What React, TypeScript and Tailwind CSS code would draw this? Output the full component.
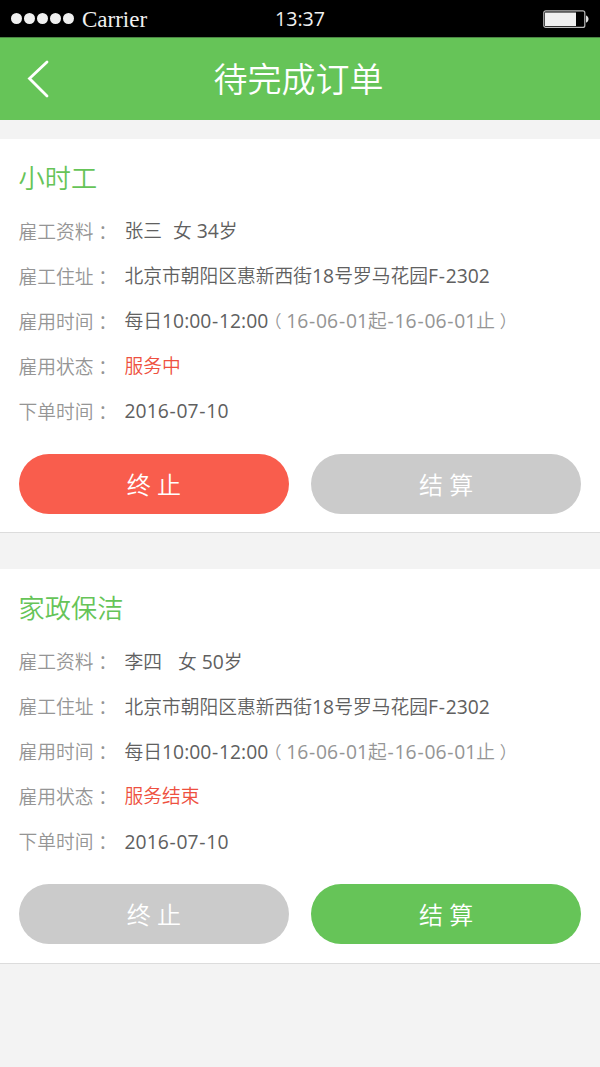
import clsx from "clsx";

type Order = {
  title: string;
  name: string;
  detail: string;
  nameGap: string;
  status: string;
  finished: boolean;
};

const orders: Order[] = [
  { title: "小时工", name: "张三", detail: "女 34岁", nameGap: "gap-[11px]", status: "服务中", finished: false },
  { title: "家政保洁", name: "李四", detail: "女 50岁", nameGap: "gap-4", status: "服务结束", finished: true },
];

// Digits and hyphens run slightly wider than the Chinese text around them
function Mixed({ text }: { text: string }) {
  return (
    <>
      {text.split(/([0-9A-Z:]+|-)/).map((part, i) => {
        if (part === "-") {
          return (
            <span key={i} className="inline-block w-[7.8px] text-center text-[19.3px] leading-none font-normal">
              -
            </span>
          );
        }
        if (/^[0-9A-Z:]+$/.test(part)) {
          return (
            <span key={i} className="text-[19.3px] leading-none font-normal">
              {part}
            </span>
          );
        }
        return part;
      })}
    </>
  );
}

// Full-width bracket with its glyph centred in the em box
function Bracket({ char }: { char: string }) {
  return (
    <span className="inline-block w-[18px] text-center text-[17px] [font-feature-settings:'halt']">{char}</span>
  );
}

function StatusBar() {
  return (
    <div className="grid h-[37px] grid-cols-3 items-center bg-black text-[#f0f0f0]">
      <div className="flex items-center pl-[11px]">
        <div className="flex gap-[2px]">
          {[0, 1, 2, 3, 4].map((n) => (
            <span key={n} className="size-[11px] rounded-full bg-[#f0f0f0]" />
          ))}
        </div>
        <span className="pt-px pl-2 font-['Liberation_Serif',serif] text-[23px] leading-none font-normal">Carrier</span>
      </div>
      <div className="text-center text-[19.6px] leading-none font-normal">13:37</div>
      <div className="flex justify-end pr-[11px]">
        <svg width="46" height="18" viewBox="0 0 46 18" fill="none">
          <rect x="0.8" y="0.8" width="41" height="16.6" rx="2" stroke="#bbb" strokeWidth="1.2" />
          <rect x="2" y="2.5" width="31" height="13.5" fill="#f0f0f0" />
          <path d="M43 5.5c3.4 1.2 3.4 6 0 7.2z" fill="#e0e0e0" />
        </svg>
      </div>
    </div>
  );
}

function Header() {
  return (
    <header className="grid h-[83px] grid-cols-[60px_1fr_60px] items-center border-t border-[#4b8644] bg-[#66c458] text-white">
      <button className="pl-[27px]" aria-label="返回">
        <svg width="22" height="38" viewBox="0 0 22 38" fill="none" stroke="currentColor" strokeWidth="2.8">
          <path d="M20 2 2.5 18.5 20 36" strokeLinecap="round" />
        </svg>
      </button>
      <h1 className="pr-[3px] text-center text-[34px] leading-none">待完成订单</h1>
    </header>
  );
}

function Row({ label, children }: { label: string; children: React.ReactNode }) {
  return (
    <div className="flex h-[45px] items-center">
      <dt className="w-[106px] pt-[3px] text-[#959595]">
        {label}
        <span className="align-[-1px] font-['Noto_Sans_CJK_TC',sans-serif] leading-[0]">{"\uff1a"}</span>
      </dt>
      <dd className="pt-px text-[#606060]">{children}</dd>
    </div>
  );
}

function ActionButton({ label, color }: { label: string; color: string }) {
  return (
    <button className={clsx("h-[60px] rounded-full pt-px text-[24px] leading-none text-white", color)}>{label}</button>
  );
}

function OrderCard({ order }: { order: Order }) {
  return (
    <section className="h-[394.4px] border-b border-[#dcdcdc] bg-white px-[18.6px] pt-[18px]">
      <h2 className="h-[51px] text-[26.2px] leading-[42px] text-[#66c458]">{order.title}</h2>
      <dl className="text-[18.75px] leading-none whitespace-nowrap">
        <Row label="雇工资料">
          <span className={clsx("flex items-baseline", order.nameGap)}>
            <span>{order.name}</span>
            <span>
              <Mixed text={order.detail} />
            </span>
          </span>
        </Row>
        <Row label="雇工住址">
          <Mixed text="北京市朝阳区惠新西街18号罗马花园F-2302" />
        </Row>
        <Row label="雇用时间">
          <Mixed text="每日10:00-12:00" />
          <span className="text-[#959595]">
            <Bracket char={"\uff08"} />
            <Mixed text="16-06-01起-16-06-01止" />
            <Bracket char={"\uff09"} />
          </span>
        </Row>
        <Row label="雇用状态">
          <span className="text-[#ee5040]">{order.status}</span>
        </Row>
        <Row label="下单时间">
          <Mixed text="2016-07-10" />
        </Row>
      </dl>
      <div className="grid grid-cols-2 gap-[22px] pt-[21px]">
        <ActionButton label="终 止" color={order.finished ? "bg-[#cbcbcb]" : "bg-[#f95d4d]"} />
        <ActionButton label="结 算" color={order.finished ? "bg-[#66c458]" : "bg-[#cbcbcb]"} />
      </div>
    </section>
  );
}

export default function App() {
  return (
    <div className="h-[1067px] w-[600px] overflow-hidden bg-[#f3f3f3] font-['Open_Sans','Noto_Sans_CJK_SC',sans-serif] font-[350]">
      <StatusBar />
      <Header />
      <main className="flex flex-col gap-9 pt-[19px]">
        {orders.map((order) => (
          <OrderCard key={order.title} order={order} />
        ))}
      </main>
    </div>
  );
}
